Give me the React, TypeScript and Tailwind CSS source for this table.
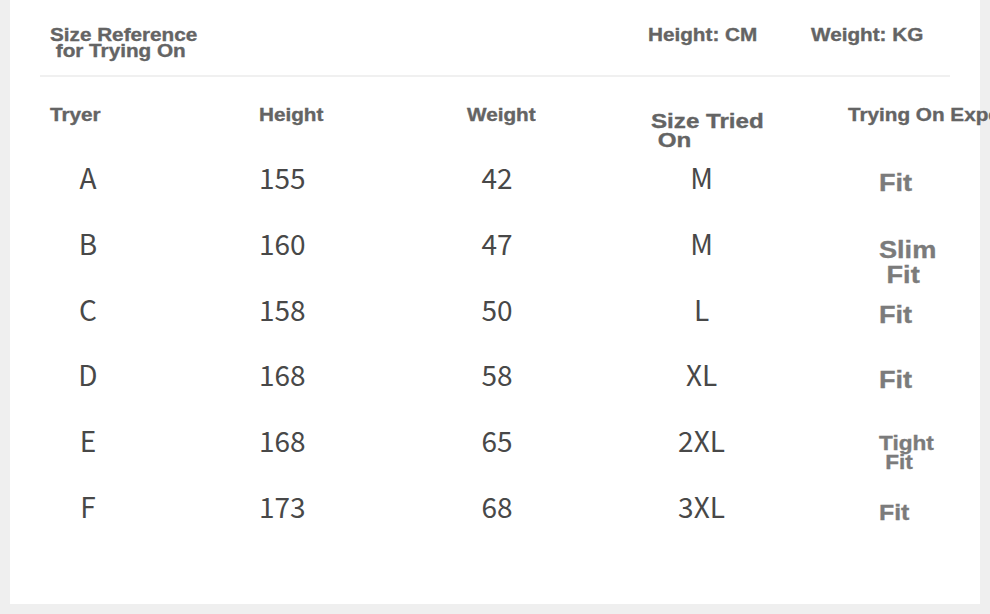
import React from 'react';

// Size reference table: who tried which size and how it fit.

interface TryOn {
  tryer: string;
  height: number;
  weight: number;
  size: string;
  fit: string;
  fitClass: string;
}

const rows: TryOn[] = [
  { tryer: 'A', height: 155, weight: 42, size: 'M', fit: 'Fit', fitClass: 'pt-[24px] text-[24px] leading-[25px]' },
  { tryer: 'B', height: 160, weight: 47, size: 'M', fit: 'Slim\n Fit', fitClass: 'pt-[25px] text-[24px] leading-[25px]' },
  { tryer: 'C', height: 158, weight: 50, size: 'L', fit: 'Fit', fitClass: 'pt-[24px] text-[24px] leading-[25px]' },
  { tryer: 'D', height: 168, weight: 58, size: 'XL', fit: 'Fit', fitClass: 'pt-[24px] text-[24px] leading-[25px]' },
  { tryer: 'E', height: 168, weight: 65, size: '2XL', fit: 'Tight\n Fit', fitClass: 'pt-[25px] text-[20px] leading-[19px]' },
  { tryer: 'F', height: 173, weight: 68, size: '3XL', fit: 'Fit', fitClass: 'pt-[26px] text-[22px] leading-[24px]' },
];

// bold labels are a stretched, heavy Arial in the original
const bold =
  "font-['Liberation_Sans',Arial,sans-serif] font-bold [-webkit-text-stroke:0.35px_currentColor]";
const wide = 'inline-block origin-left scale-x-[1.15] whitespace-pre';
const plain = "font-['Noto_Sans_CJK_SC','Noto_Sans',sans-serif] font-normal";
const cols = 'grid grid-cols-[209px_208px_184px_197px_1fr] pl-[40px]';

export default function App() {
  return (
    <div className="w-[990px] h-[614px] overflow-hidden bg-[#efefef]">
      <div className="ml-[10px] w-[970px] h-[604px] bg-white">
        {/* Title + units */}
        <div className={`flex h-[75px] pt-[27px] pl-[40px] text-[18px] leading-[16px] text-[#646464] ${bold}`}>
          <div className="w-[598px]">
            <span className={wide}>{'Size Reference\n for Trying On'}</span>
          </div>
          <div className="w-[163px]">
            <span className={wide}>Height: CM</span>
          </div>
          <div>
            <span className={wide}>Weight: KG</span>
          </div>
        </div>
        <div className="mx-[30px] h-[2px] bg-[#f0f0f0]" />

        {/* Header row */}
        <div className={`${cols} h-[69px] pt-[30px] items-start text-[18px] leading-[17px] text-[#646464] ${bold}`}>
          <div>
            <span className={wide}>Tryer</span>
          </div>
          <div>
            <span className={wide}>Height</span>
          </div>
          <div>
            <span className={wide}>Weight</span>
          </div>
          <div className="mt-[4px] text-[21px] leading-[19px]">
            <span className={wide}>{'Size Tried\n On'}</span>
          </div>
          <div className="whitespace-nowrap">
            <span className={wide}>Trying On Experience</span>
          </div>
        </div>

        {/* Data rows */}
        {rows.map((r) => (
          <div key={r.tryer} className={`${cols} h-[65.8px] items-start`}>
            <div className={`w-[76px] pt-[17px] text-center text-[28px] leading-[28px] text-[#484848] ${plain}`}>{r.tryer}</div>
            <div className={`w-[46px] pt-[17px] text-center text-[28px] leading-[28px] text-[#484848] ${plain}`}>{r.height}</div>
            <div className={`w-[60px] pt-[17px] text-center text-[28px] leading-[28px] text-[#484848] ${plain}`}>{r.weight}</div>
            <div className={`w-[101px] pt-[17px] text-center text-[28px] leading-[28px] text-[#484848] ${plain}`}>{r.size}</div>
            <div className={`pl-[31px] text-[#7b7b7b] ${bold} ${r.fitClass}`}>
              <span className="inline-block origin-left scale-x-[1.13] whitespace-pre">{r.fit}</span>
            </div>
          </div>
        ))}
      </div>
    </div>
  );
}
